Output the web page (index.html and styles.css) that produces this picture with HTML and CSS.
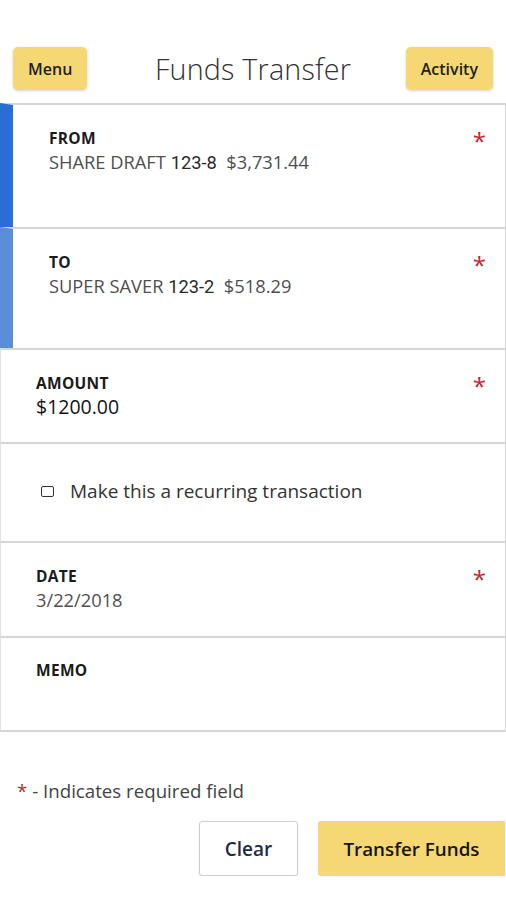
FILE: index.html
```html
<!DOCTYPE html>
<html lang="en">
<head>
<meta charset="utf-8">
<title>Funds Transfer</title>
<link rel="stylesheet" href="styles.css">
</head>
<body>
<header class="topbar">
  <button class="btn-small">Menu</button>
  <h1 class="title">Funds Transfer</h1>
  <button class="btn-small">Activity</button>
</header>
<main class="form">
  <section class="field field-from acct acct-from">
    <div class="field-body">
      <div class="label">FROM</div>
      <div class="value muted">SHARE DRAFT <span class="num">123-8</span>&nbsp;&nbsp;$3,731.44</div>
    </div>
    <span class="req">*</span>
  </section>
  <section class="field field-to acct acct-to">
    <div class="field-body">
      <div class="label">TO</div>
      <div class="value muted">SUPER SAVER <span class="num">123-2</span>&nbsp;&nbsp;$518.29</div>
    </div>
    <span class="req">*</span>
  </section>
  <section class="field field-amount">
    <div class="field-body">
      <div class="label">AMOUNT</div>
      <div class="value strong">$1200.00</div>
    </div>
    <span class="req">*</span>
  </section>
  <section class="field field-recurring">
    <label class="check">
      <span class="box"></span>
      <span class="check-text">Make this a recurring transaction</span>
    </label>
  </section>
  <section class="field field-date">
    <div class="field-body">
      <div class="label">DATE</div>
      <div class="value muted">3/22/2018</div>
    </div>
    <span class="req">*</span>
  </section>
  <section class="field field-memo">
    <div class="field-body">
      <div class="label">MEMO</div>
    </div>
  </section>
</main>
<p class="note"><span class="req-inline">*</span> - Indicates required field</p>
<div class="actions">
  <button class="btn-clear">Clear</button>
  <button class="btn-primary">Transfer Funds</button>
</div>
</body>
</html>
```
FILE: styles.css
```css
* { box-sizing: border-box; }
html, body { margin: 0; padding: 0; background: #fff; }
body {
  font-family: "Open Sans", "Noto Sans", sans-serif;
  color: #222;
  width: 506px;
}
button { font-family: inherit; cursor: pointer; }

.topbar {
  display: flex;
  align-items: center;
  justify-content: space-between;
  padding: 47px 13px 13px 13px;
}
.btn-small {
  height: 43px;
  padding: 0 15px;
  border: none;
  border-radius: 5px;
  background: #f5d873;
  color: #1e1e1e;
  font-size: 16px;
  font-weight: 600;
  box-shadow: 0 1px 3px rgba(0,0,0,0.18);
}
.title {
  margin: 0 0 0 13px;
  font-size: 28.7px;
  font-weight: 300;
  color: #333;
  letter-spacing: 0.2px;
}

.form { border-bottom: 2px solid #d6d6d6; }
.field {
  display: flex;
  align-items: flex-start;
  border-top: 2px solid #d6d6d6;
  border-right: 1px solid #d6d6d6;
  border-left: 1px solid #e2e2e2;
  padding: 22px 19px 0 35px;
}
.acct { border-left: 13px solid #2a6dd9; padding-left: 36px; }
.acct-to { border-left-color: #5b8ed8; }
.field-from { height: 124px; }
.field-to { height: 121px; }
.field-amount { height: 94px; }
.field-recurring { height: 99px; padding-top: 35px; padding-left: 40px; }
.field-date { height: 95px; }
.field-memo { height: 94px; padding-top: 21px; }

.field-body { flex: 1; }
.label {
  font-size: 15.5px;
  font-weight: 700;
  line-height: 22px;
  color: #1b1b1b;
  letter-spacing: 0.3px;
}
.value {
  font-size: 18.3px;
  line-height: 26px;
}
.muted { color: #4f4f4f; }
.num { color: #2a2a2a; font-family: "Roboto", "Open Sans", sans-serif; }
.strong { color: #141414; font-size: 19.5px; }
.req {
  color: #c0262a;
  font-size: 24px;
  line-height: 24px;
  margin-top: 2px;
}

.check {
  display: flex;
  align-items: center;
  gap: 16px;
  font-size: 19px;
  color: #333;
  line-height: 24px;
}
.box {
  width: 13px;
  height: 11px;
  border: 1.5px solid #333;
  border-radius: 2px;
}

.note {
  margin: 46px 0 0 17px;
  font-size: 18.7px;
  line-height: 26px;
  color: #444;
}
.req-inline { color: #c0262a; }

.actions {
  display: flex;
  justify-content: flex-end;
  gap: 20px;
  margin-top: 17px;
  padding-right: 1px;
}
.btn-clear {
  width: 99px;
  height: 55px;
  background: #fff;
  border: 1px solid #cfcfcf;
  border-radius: 3px;
  font-size: 19px;
  font-weight: 600;
  color: #1f2b4a;
  box-shadow: 0 1px 2px rgba(0,0,0,0.1);
}
.btn-primary {
  width: 187px;
  height: 55px;
  background: #f5d873;
  border: none;
  border-radius: 3px 0 0 3px;
  font-size: 18.8px;
  font-weight: 600;
  color: #151515;
}
```
